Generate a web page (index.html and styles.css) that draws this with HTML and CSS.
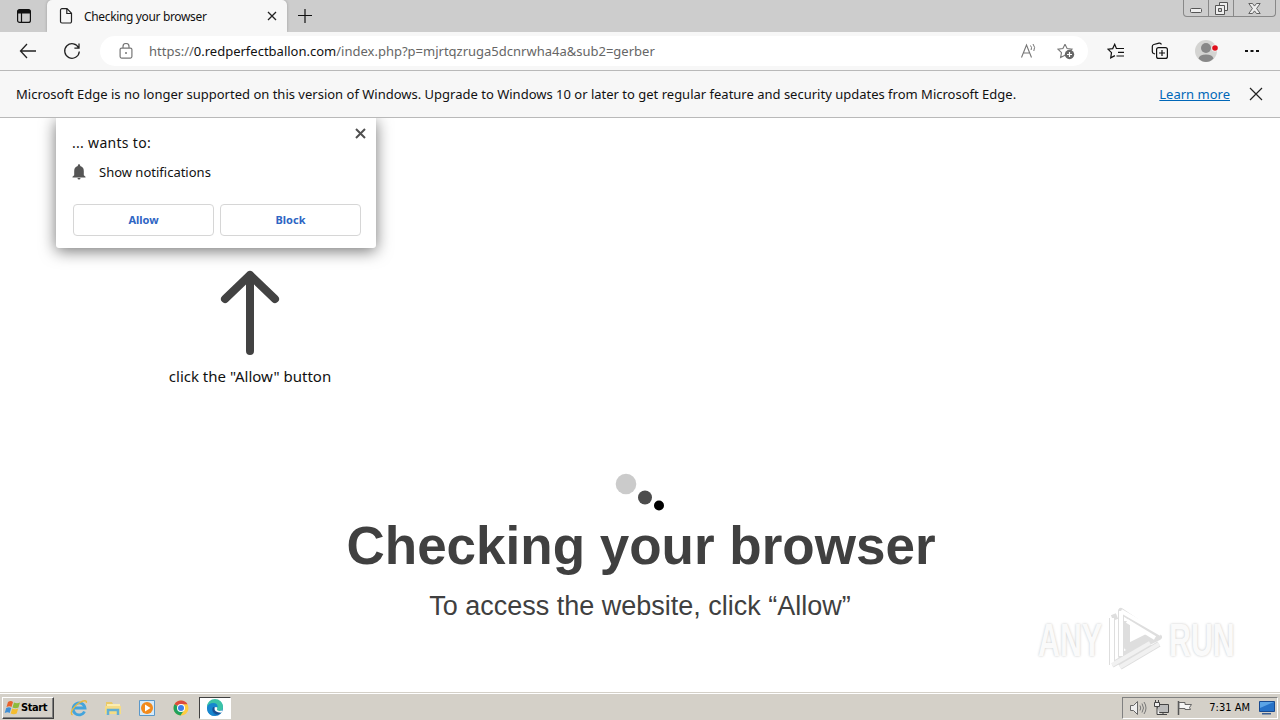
FILE: index.html
```html
<!DOCTYPE html>
<html lang="en">
<head>
  <meta charset="UTF-8">
  <meta name="viewport" content="width=device-width, initial-scale=1.0">
  <title>Checking your browser</title>
  <link rel="stylesheet" href="styles.css">
</head>
<body>
  <div class="tab-bar">
    <svg class="tab-actions" width="16" height="16" viewBox="0 0 16 16"><rect x="1.6" y="1.6" width="12.8" height="12.8" rx="2" fill="none" stroke="#111" stroke-width="1.2"/><path d="M1.5 5.5V3.5a2 2 0 0 1 2-2h9a2 2 0 0 1 2 2v2z" fill="#111"/><path d="M5.5 5v9" stroke="#111" stroke-width="1.2"/></svg>
    <div class="tab">
      <svg width="14" height="16" viewBox="0 0 14 16"><path d="M3 .7h5l4.500 4.600v8.200a1.500 1.500 0 0 1-1.500 1.500H3a1.500 1.500 0 0 1-1.500-1.500V2.200A1.500 1.500 0 0 1 3 .7zM7.800.9v4.600h4.600" fill="none" stroke="#222" stroke-width="1.200"/></svg>
      <span class="tab-title">Checking your browser</span>
      <svg width="10" height="10" viewBox="0 0 10 10"><path d="M1 1l8 8M9 1l-8 8" stroke="#222" stroke-width="1.300"/></svg>
    </div>
    <svg class="new-tab" width="16" height="16" viewBox="0 0 16 16"><path d="M8 1v14M1 7.500h14" stroke="#111" stroke-width="1.200"/></svg>
    <div class="window-buttons">
      <span class="win-btn"><svg width="12" height="5" viewBox="0 0 12 5"><rect x=".5" y=".5" width="11" height="4" rx="1" fill="#eee" stroke="#555"/></svg></span>
      <span class="win-btn"><svg width="13" height="13" viewBox="0 0 13 13"><path d="M4.500.5h8v8h-8z" fill="#eee" stroke="#555"/><path d="M.5 3.500h9v9h-9z" fill="#eee" stroke="#555"/><path d="M3.500 6.500h3v3h-3z" fill="#ccc" stroke="#555"/></svg></span>
      <span class="win-btn win-close"><svg width="13" height="11" viewBox="0 0 13 11"><path d="M.8.500h3.700l2 2.600 2-2.600h3.700L8.600 5.500l3.600 5H8.500l-2-2.600-2 2.600H.8l3.600-5z" fill="#eee" stroke="#555" stroke-width=".9"/></svg></span>
    </div>
  </div>

  <div class="toolbar">
    <svg class="back" width="18" height="16" viewBox="0 0 18 16"><path d="M8 1L1.500 8 8 15M1.500 8H17" fill="none" stroke="#222" stroke-width="1.300"/></svg>
    <svg class="reload" width="18" height="18" viewBox="0 0 18 18"><path d="M15.700 6A7.300 7.300 0 1 0 16.300 9.500M16 1.500V6.200h-4.600" fill="none" stroke="#222" stroke-width="1.300"/></svg>
    <div class="address">
      <svg width="14" height="16" viewBox="0 0 14 16"><rect x="1.100" y="5.100" width="11.800" height="10" rx="1.500" fill="none" stroke="#777" stroke-width="1.200"/><path d="M4 5V3.500a3 3 0 0 1 6 0V5" fill="none" stroke="#777" stroke-width="1.200"/><circle cx="7" cy="10" r="1" fill="#777"/></svg>
      <span class="url">https://<b>0.redperfectballon.com</b>/index.php?p=mjrtqzruga5dcnrwha4a&amp;sub2=gerber</span>
      <svg class="read-aloud" width="18" height="16" viewBox="0 0 18 16"><path d="M1.500 14.500L6.500 2l5 12.500M3.300 10h6.500" fill="none" stroke="#777" stroke-width="1.100"/><path d="M10.500 2.500q1.800 2 .6 4.500M13 1q2.800 3.300 .8 7" fill="none" stroke="#777"/></svg>
      <svg width="18" height="17" viewBox="0 0 18 17"><path d="M8 1.200l2.100 4.300 4.900.7-3.500 3.400M8 1.200L5.900 5.500 1 6.200l3.500 3.500-.9 4.900L8 12.300" fill="none" stroke="#777" stroke-width="1.100"/><circle cx="12.500" cy="11.500" r="4.700" fill="#666"/><path d="M12.500 9v5M10 11.500h5" stroke="#fff" stroke-width="1.200"/></svg>
    </div>
    <svg class="favorites" width="18" height="17" viewBox="0 0 18 17"><path d="M10.200 5.500H9.400L7.700 1.300 5.700 5.600 1 6.200l3.500 3.500-.8 5.200 4.200-2.300" fill="none" stroke="#111" stroke-width="1.200"/><path d="M9.400 5.500H17M11 9.300h6M9.500 13h7.500" stroke="#111" stroke-width="1.200"/></svg>
    <svg class="collections" width="18" height="18" viewBox="0 0 18 18"><path d="M4 12L2.800 11.500a2 2 0 0 1-1.500-2L1.300 4.500a2 2 0 0 1 1.500-2L8 1.200a2 2 0 0 1 2.400 1.300" fill="none" stroke="#111" stroke-width="1.200"/><rect x="5.600" y="5.600" width="10.800" height="10.800" rx="2" fill="none" stroke="#111" stroke-width="1.200"/><path d="M11 8v6M8 11h6" stroke="#111" stroke-width="1.200"/></svg>
    <svg class="profile" width="24" height="24" viewBox="0 0 24 24"><circle cx="12" cy="12" r="11" fill="#d4d4d2"/><circle cx="12" cy="9" r="5" fill="#888"/><path d="M4.500 19.500q1-4 7.500-4t7.500 4Q16 23 12 23t-7.500-3.500z" fill="#888"/><circle cx="21" cy="9" r="3.500" fill="#f7f7f7"/><circle cx="21" cy="9" r="2.800" fill="#e0101c"/></svg>
    <svg class="more" width="14" height="4" viewBox="0 0 14 4"><path d="M0 1h3v2H0zM5.500 1h3v2h-3zM11 1h3v2h-3z" fill="#111"/></svg>
  </div>

  <div class="info-bar">
    <span class="info-text">Microsoft Edge is no longer supported on this version of Windows. Upgrade to Windows 10 or later to get regular feature and security updates from Microsoft Edge.</span>
    <a class="learn-more" href="#">Learn more</a>
    <svg width="14" height="14" viewBox="0 0 14 14"><path d="M1 1l12 12M13 1L1 13" stroke="#222" stroke-width="1.200"/></svg>
  </div>

  <main class="page">
    <div class="prompt">
      <div class="popup">
        <div class="popup-head">
          <span class="popup-title">... wants to:</span>
          <svg width="11" height="11" viewBox="0 0 11 11"><path d="M1 1l9 9M10 1l-9 9" stroke="#505050" stroke-width="2"/></svg>
        </div>
        <div class="permission">
          <svg width="14" height="16" viewBox="0 0 14 16"><path d="M7 .3a1.200 1.200 0 0 1 1.200 1.200v.6Q11.800 3 11.800 7v4.200l1.700 1.600v.7H.500v-.7l1.700-1.600V7q0-4 3.600-4.900v-.6A1.200 1.200 0 0 1 7 .3zM5.500 14h3a1.500 1.500 0 0 1-3 0z" fill="#555"/></svg>
          <span>Show notifications</span>
        </div>
        <div class="popup-buttons">
          <button class="popup-btn">Allow</button>
          <button class="popup-btn">Block</button>
        </div>
      </div>
      <div class="hint">
        <svg width="60" height="86" viewBox="0 0 60 86"><path d="M30 81V5M5 29L30 5l25 24" fill="none" stroke="#424242" stroke-width="8" stroke-linecap="round" stroke-linejoin="round"/></svg>
        <div class="hint-text">click the "Allow" button</div>
      </div>
    </div>

    <div class="checking">
      <svg class="dots" width="50" height="40" viewBox="0 0 50 40"><circle cx="11" cy="12" r="10.300" fill="#cbcbcb"/><circle cx="30" cy="25.500" r="7" fill="#4c4c4c"/><circle cx="44" cy="33.500" r="5" fill="#000"/></svg>
      <h1>Checking your browser</h1>
      <p class="subtitle">To access the website, click “Allow”</p>
    </div>

    <div class="watermark">
      <span class="mark-text">ANY</span>
      <svg width="58" height="66" viewBox="0 0 58 66"><g fill="none" stroke-linejoin="round"><path d="M5 11v47M5 11l5-2M14 4v45l38-19zM20 14v26l24-12M13 60l39-23M5 58l38-22" stroke="#dedede" stroke-width="6"/><path d="M5 11v47M14 4v45M14 4l40 23M20 14l28 17" stroke="#fff" stroke-width="4"/><path d="M13 60l39-23M5 58l38-22" stroke="#f1f1f1" stroke-width="4"/></g></svg>
      <span class="mark-text">RUN</span>
    </div>
  </main>

  <footer class="taskbar">
    <div class="start">
      <svg width="17" height="16" viewBox="0 0 17 16"><path d="M4 2q3-2 5 0L7.500 7q-2-1.500-5 0z" fill="#e8622c"/><path d="M10 2.500q3 1.500 6 0L14.500 7.500q-3 1.500-6 0z" fill="#8dbb3c"/><path d="M2.200 8q3-1.500 5 0L5.700 13q-2-1.500-5 0z" fill="#3f8fd6"/><path d="M8.200 8.500q3 1.500 6 0L12.700 13.500q-3 1.500-6 0z" fill="#f5bd30"/></svg>
      <span>Start</span>
    </div>
    <div class="quick-launch">
      <svg width="18" height="18" viewBox="0 0 18 18"><path d="M14.500 12.500A6 6 0 1 1 15 9H4" fill="none" stroke="#43a4dc" stroke-width="2.800"/><path d="M2.500 16C-1 14 4 7 9 4s8-3 7.300-.2" fill="none" stroke="#e9b93e" stroke-width="1.400"/></svg>
      <svg width="18" height="18" viewBox="0 0 18 18"><path d="M2 3h6l1 2h7v9H2z" fill="#e9c968"/><path d="M3 5h13v4H3z" fill="#fbedb0"/><path d="M1 7h16v8H1z" fill="#f5dc86"/><path d="M4 16v-5h10v5" fill="none" stroke="#63afd4" stroke-width="2.500"/></svg>
      <svg width="18" height="18" viewBox="0 0 18 18"><path d="M1.500 1.500h15v15h-15z" fill="#d5eafa" stroke="#5b98c9"/><circle cx="9" cy="9" r="6" fill="#f28a1c"/><path d="M7 5.500L12.500 9 7 12.500z" fill="#fff"/></svg>
      <svg width="18" height="18" viewBox="0 0 18 18"><circle cx="9" cy="9" r="7.500" fill="#ffcd40"/><path d="M9 9L2.500 5.250A7.500 7.500 0 0 1 15.500 5.250H9z" fill="#dd4b3e"/><path d="M9 9L2.500 5.250A7.500 7.500 0 0 0 8.500 16.500L12.200 10.900z" fill="#1fa15d"/><circle cx="9" cy="9" r="4" fill="#fff"/><circle cx="9" cy="9" r="3" fill="#3f7fe8"/></svg>
      <div class="running">
        <svg width="18" height="18" viewBox="0 0 18 18"><circle cx="9" cy="9" r="8" fill="#1379c4"/><path d="M1 8A8 8 0 0 1 17 8q.2 4-4.500 4-3 0-2.500-1.500Q12 5 6.500 5 3 5 1 8z" fill="#3bc3a7"/><path d="M1 9q1-5 6.500-5 4 .2 4.200 4L7 8.500Q5 13 9 17 1.500 17 1 9z" fill="#1787cf"/><path d="M7 8q-2.500 5 3.500 7.500Q14.500 15 16 12.500q-3.500 1.300-5.800-.5Q9 10.500 10 8.500z" fill="#174f93"/><path d="M8.500 8.500q2-1.300 2.800.5-1 1.500.3 2.500 2 .8 4-.1l1 .7-1.400 1.600q-7.400-.5-6.700-5.200z" fill="#fff"/></svg>
      </div>
    </div>
    <div class="tray">
      <svg width="18" height="16" viewBox="0 0 18 16"><path d="M1.500 5.500h3l4-4v13l-4-4h-3z" fill="#eee" stroke="#666"/><path d="M11 5.500q1.500 2.500 0 5M13 3.500q3 4.500 0 9M15 2q4 6 0 12" fill="none" stroke="#777"/></svg>
      <svg width="17" height="16" viewBox="0 0 17 16"><path d="M4.500 4.500h11v8h-11z" fill="#bbb" stroke="#444"/><path d="M6 14.500h8M10 12v2" stroke="#444"/><path d="M1.500 2.500h5v4h-5zM2.500 0v2M5.500 0v2M4 7v7.500h3" fill="#eee" stroke="#444"/></svg>
      <svg width="17" height="16" viewBox="0 0 17 16"><path d="M2.500 1v14" stroke="#555" stroke-width="1.500"/><path d="M3 2.500h6v2h6.500l-2 3 1 2H9v-1H3z" fill="#f5f5f5" stroke="#666"/></svg>
      <span class="clock">7:31 AM</span>
      <svg width="16" height="15" viewBox="0 0 16 15"><path d="M.5 1.500h15v10H.5z" fill="#2672c8" stroke="#184a90"/><path d="M1 2h14L1 8z" fill="#5ba4e6"/><path d="M3 13h9v1.500H3z" fill="#3a5f92"/></svg>
    </div>
  </footer>
</body>
</html>
```

FILE: styles.css
```css
* {
  box-sizing: border-box;
}
body {
  margin: 0;
  width: 1280px;
  height: 720px;
  overflow: hidden;
  display: flex;
  flex-direction: column;
  background-color: #fff;
  color: #111;
  font-family: "Noto Sans", "Open Sans", sans-serif;
  font-size: 13px;
}
svg {
  display: block;
  flex: none;
}
span, a, p, h1, .hint-text {
  white-space: nowrap;
}

/* tabs */
.tab-bar {
  flex: none;
  display: flex;
  align-items: center;
  height: 32px;
  background-color: #cdcdcd;
}
.tab-actions {
  margin-left: 16px;
}
.tab {
  display: flex;
  align-items: center;
  align-self: stretch;
  width: 240px;
  margin-left: 15px;
  padding: 0 10px 0 12px;
  background-color: #f7f7f7;
  border-radius: 5px 5px 0 0;
  box-shadow: 0 0 3px rgba(0, 0, 0, 0.25);
}
.tab-title {
  flex: 1;
  margin-left: 11px;
  font-size: 12px;
  letter-spacing: -0.35px;
}
.new-tab {
  margin-left: 10px;
}
.window-buttons {
  display: flex;
  align-self: flex-start;
  height: 17px;
  margin-left: auto;
  margin-right: 4px;
  border: 1px solid #888;
  border-top: 0;
  border-radius: 0 0 4px 4px;
}
.win-btn {
  display: flex;
  align-items: center;
  justify-content: center;
  width: 25px;
  border-right: 1px solid #888;
}
.win-btn:first-child {
  padding-top: 4px;
}
.win-close {
  width: 41px;
  border-right: 0;
}

/* toolbar */
.toolbar {
  position: relative;
  flex: none;
  display: flex;
  align-items: center;
  height: 39px;
  background-color: #f7f7f7;
  border-bottom: 1px solid #b9b9b9;
}
.back {
  margin-left: 19px;
}
.reload {
  margin-left: 26px;
}
.address {
  display: flex;
  align-items: center;
  width: 988px;
  height: 30px;
  margin-left: 19px;
  padding: 0 13px 0 19px;
  border-radius: 15px;
  background-color: #fff;
}
.url {
  flex: 1;
  margin-left: 16px;
  color: #666;
}
.url b {
  font-weight: normal;
  color: #111;
}
.read-aloud {
  margin-right: 19px;
}
.favorites {
  margin-left: 19px;
}
.collections {
  margin-left: 26px;
}
.profile {
  margin-left: 25px;
}
.more {
  margin-left: 27px;
}

.info-bar {
  flex: none;
  display: flex;
  align-items: center;
  height: 47px;
  padding: 0 17px 0 16px;
  background-color: #f7f7f7;
  border-bottom: 1px solid #b9b9b9;
}
.info-text {
  flex: 1;
}
.learn-more {
  margin-right: 19px;
  color: #0067b8;
}

/* page */
.page {
  position: relative;
  flex: 1;
}
.prompt {
  width: 320px;
  margin-left: 56px;
}
.popup {
  height: 130px;
  padding: 10px 10px 12px 16px;
  background-color: #fff;
  border-radius: 0 0 3px 3px;
  box-shadow: 0 3px 16px rgba(0, 0, 0, 0.55);
  clip-path: inset(0 -30px -30px -30px);
}
.popup-head {
  display: flex;
  justify-content: space-between;
  height: 34px;
}
.popup-title {
  padding-top: 5px;
  font-size: 14px;
  line-height: 20px;
  letter-spacing: 0.3px;
}
.permission {
  display: flex;
  align-items: center;
  height: 20px;
  gap: 13px;
}
.popup-buttons {
  display: flex;
  gap: 6px;
  margin: 22px 5px 0 1px;
}
.popup-btn {
  flex: 1;
  height: 32px;
  padding: 0 0 2px;
  border: 1px solid #d6d6d6;
  border-radius: 4px;
  background-color: #fff;
  color: #2f66c4;
  font-family: "Noto Sans", sans-serif;
  font-size: 11px;
  font-weight: bold;
}
.hint {
  display: flex;
  flex-direction: column;
  align-items: center;
  width: 300px;
  margin-left: 44px;
  padding-top: 22px;
}
.hint-text {
  margin-top: 10px;
  font-size: 15px;
  line-height: 20px;
}
.checking {
  display: flex;
  flex-direction: column;
  align-items: center;
  color: #404040;
  font-family: "Liberation Sans", Arial, sans-serif;
}
.dots {
  margin-top: 86px;
}
h1 {
  margin: 4px 0 0 2px;
  font-size: 53px;
  line-height: 60px;
}
.subtitle {
  margin: 14px 0 0;
  font-size: 27px;
  line-height: 32px;
}
.watermark {
  position: absolute;
  left: 1038px;
  top: 489px;
  display: flex;
  align-items: center;
  gap: 4px;
}
.mark-text {
  width: 65px;
  color: #fafafa;
  font: bold 46px/66px "Liberation Sans", Arial, sans-serif;
  transform: scaleX(0.66);
  transform-origin: left;
  text-shadow: 0 0 3px #c4c4c4;
}

/* taskbar */
.taskbar {
  flex: none;
  display: flex;
  align-items: center;
  height: 28px;
  padding: 2px 2px 0;
  background-color: #d4d0c8;
  border-top: 1px solid #d4d0c8;
  box-shadow: inset 0 1px #fff;
}
.start {
  display: flex;
  align-items: center;
  width: 52px;
  height: 22px;
  padding-left: 1px;
  border: 1px solid;
  border-color: #fff #404040 #404040 #fff;
  box-shadow: inset -1px -1px #808080;
  color: #000;
  font: bold 11px "DejaVu Sans Condensed", "DejaVu Sans", sans-serif;
  letter-spacing: -0.4px;
}
.quick-launch {
  display: flex;
  align-items: center;
  gap: 16px;
  margin-left: 16px;
}
.running {
  display: flex;
  align-items: center;
  justify-content: center;
  width: 32px;
  height: 22px;
  margin-left: -7px;
  border: 1px solid;
  border-color: #404040 #fff #fff #404040;
  background-color: #fff;
}
.tray {
  display: flex;
  align-items: center;
  gap: 6px;
  width: 156px;
  height: 22px;
  margin-left: auto;
  padding: 0 2px 0 6px;
  border: 1px solid;
  border-color: #808080 #fff #fff #808080;
}
.clock {
  margin-left: auto;
  margin-right: 3px;
  color: #000;
  font: 11px "DejaVu Sans Condensed", "DejaVu Sans", sans-serif;
}
```
